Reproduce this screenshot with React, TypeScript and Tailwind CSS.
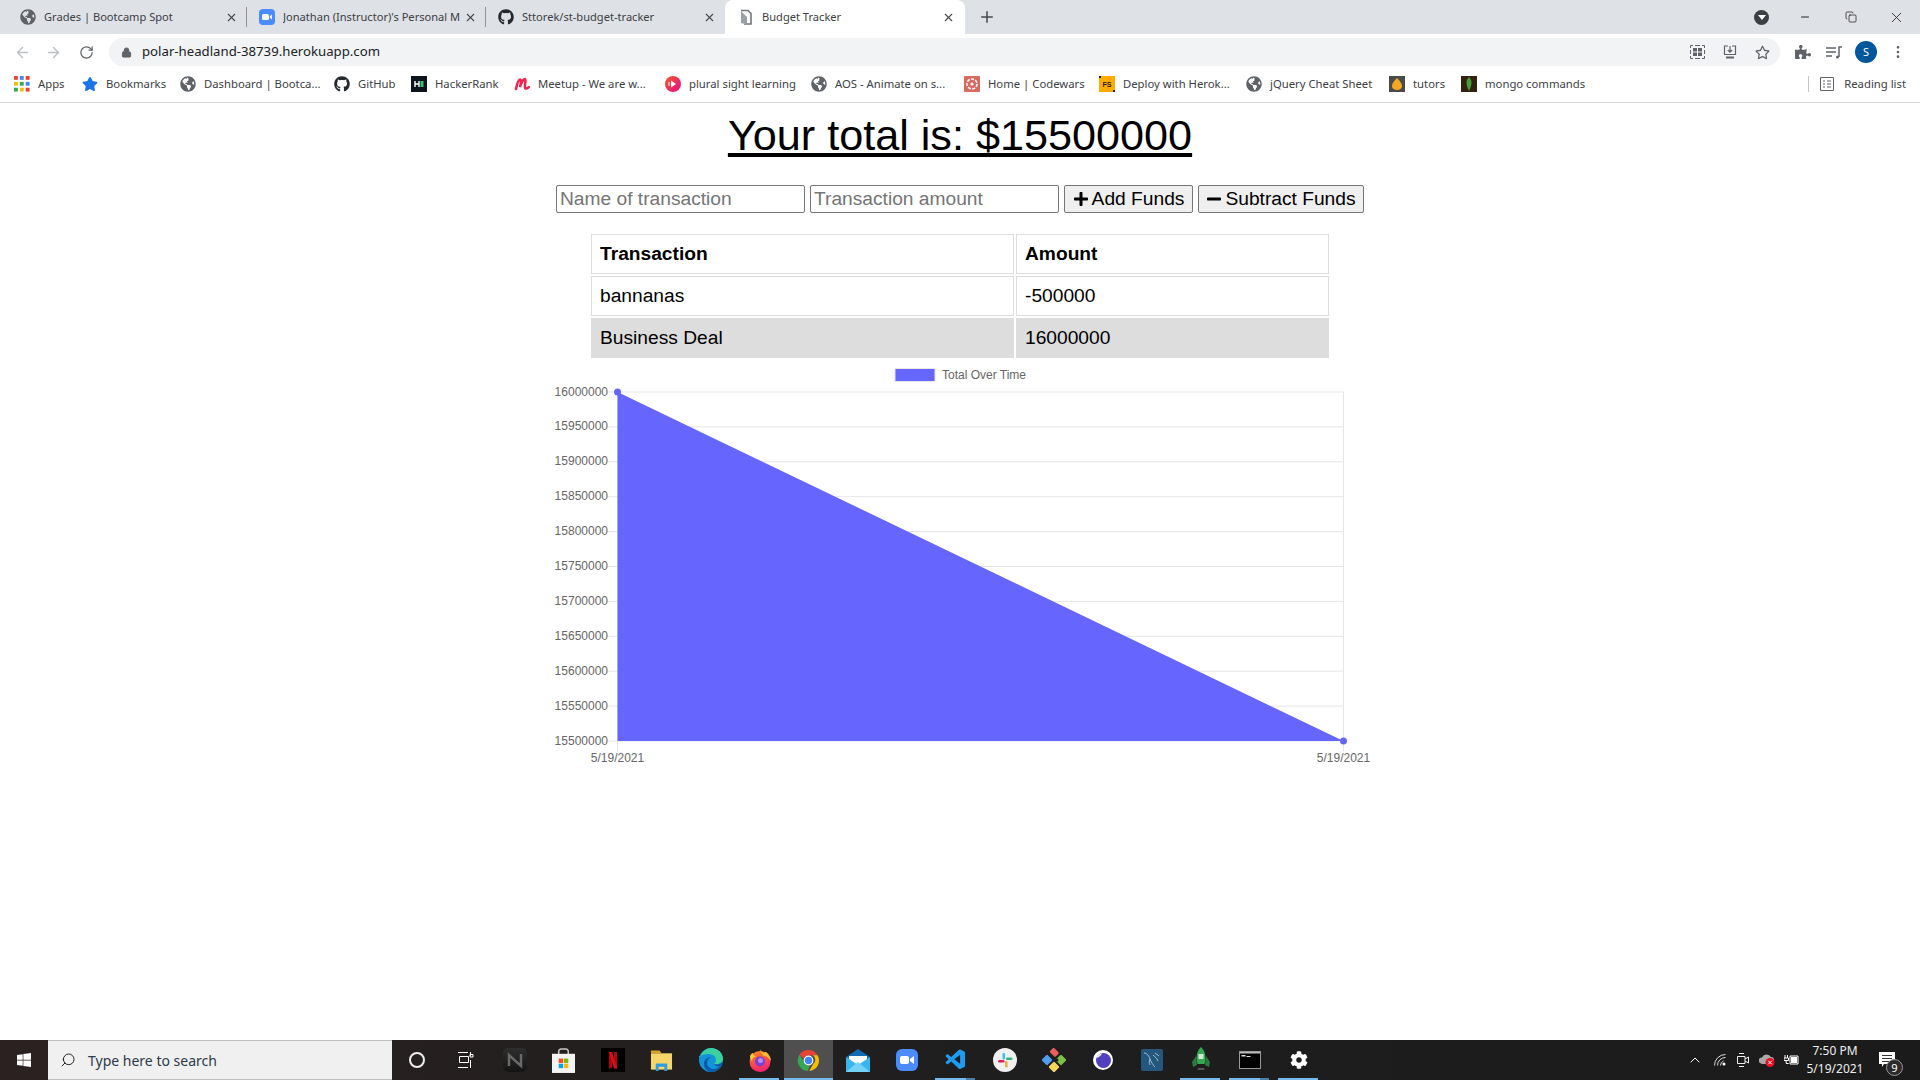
import React from 'react';
import { ArrowLeft, ArrowRight, RotateCw, Lock, X, Plus, Minus, EllipsisVertical, Search, ChevronUp, Copy } from 'lucide-react';
import { FaGithub, FaGlobeAmericas, FaPuzzlePiece, FaStar, FaRegStar, FaWindows, FaPlus, FaMinus, FaCog } from 'react-icons/fa';
import { VscVscode } from 'react-icons/vsc';

const Globe = () => <FaGlobeAmericas className="w-4 h-4 shrink-0 text-[#5f6368]" />;

const AppsIcon = () => (
  <svg viewBox="0 0 15 15" className="w-4 h-4 shrink-0">
    {[0, 5.5, 11].map((y, r) => [0, 5.5, 11].map((x, c) => (
      <rect key={`${r}${c}`} x={x} y={y} width="3.6" height="3.6" fill={['#ea4335', '#4285f4', '#ea4335', '#fbbc04', '#34a853', '#4285f4', '#34a853', '#fbbc04', '#ea4335'][r * 3 + c]} />
    )))}
  </svg>
);

const Zoom = () => (
  <svg viewBox="0 0 16 16" className="w-4 h-4 shrink-0">
    <rect width="16" height="16" rx="4" fill="#4a8cff" />
    <rect x="3" y="5" width="7" height="6" rx="1.5" fill="#fff" />
    <path d="M10.8 7.3 13 5.6v4.8l-2.2-1.7z" fill="#fff" />
  </svg>
);

const tabs = [
  { title: 'Grades | Bootcamp Spot', icon: <Globe /> },
  { title: "Jonathan (Instructor)'s Personal M", icon: <Zoom /> },
  { title: 'Sttorek/st-budget-tracker', icon: <FaGithub className="w-4 h-4 shrink-0 text-[#24292e]" /> },
];

const bookmarks = [
  { label: 'Apps', w: 'w-[68px]', icon: <AppsIcon /> },
  { label: 'Bookmarks', w: 'w-[98px]', icon: <FaStar className="w-4 h-4 shrink-0 text-[#1a73e8]" /> },
  { label: 'Dashboard | Bootca...', w: 'w-[154px]', icon: <Globe /> },
  { label: 'GitHub', w: 'w-[77px]', icon: <FaGithub className="w-4 h-4 shrink-0 text-[#24292e]" /> },
  {
    label: 'HackerRank', w: 'w-[103px]', icon: (
      <svg viewBox="0 0 16 16" className="w-4 h-4 shrink-0"><rect width="16" height="16" fill="#0e141e" /><path d="M4 5v6M8 5v6M4 8h4" stroke="#fff" strokeWidth="1.4" /><rect x="9.5" y="5" width="3" height="6" fill="#2ec866" /></svg>
    ),
  },
  {
    label: 'Meetup - We are w...', w: 'w-[151px]', icon: (
      <svg viewBox="0 0 16 16" className="w-4 h-4 shrink-0"><path d="M2 13C3 8 4.5 3.5 6 3.5 7.5 3.5 6.8 8.5 6 11 7 7 9.5 2.5 11 3c1.6.5-1 7 .2 9 .6 1 2.3.6 3.6-.8" fill="none" stroke="#f0254f" strokeWidth="2.6" strokeLinecap="round" /></svg>
    ),
  },
  {
    label: 'plural sight learning', w: 'w-[146px]', icon: (
      <svg viewBox="0 0 16 16" className="w-4 h-4 shrink-0">
        <defs><linearGradient id="ps" x1="0" y1="0" x2="1" y2="1"><stop offset="0" stopColor="#f05a28" /><stop offset="1" stopColor="#e80a89" /></linearGradient></defs>
        <circle cx="8" cy="8" r="8" fill="url(#ps)" /><path d="M6 4.5v7l5-3.5z" fill="#fff" /><path d="M4 6v4" stroke="#fff" />
      </svg>
    ),
  },
  { label: 'AOS - Animate on s...', w: 'w-[153px]', icon: <Globe /> },
  {
    label: 'Home | Codewars', w: 'w-[135px]', icon: (
      <svg viewBox="0 0 16 16" className="w-4 h-4 shrink-0"><rect width="16" height="16" rx="1" fill="#d9695f" /><circle cx="8" cy="8" r="5" fill="none" stroke="#fff" strokeWidth="1.6" strokeDasharray="3 1.4" /><circle cx="8" cy="8" r="1.6" fill="#fff" /></svg>
    ),
  },
  {
    label: 'Deploy with Herok...', w: 'w-[147px]', icon: (
      <svg viewBox="0 0 16 16" className="w-4 h-4 shrink-0"><rect width="16" height="16" fill="#ffab00" /><path d="M0 0h2v2H0zM14 14h2v2h-2z" fill="#222" /><text x="8" y="11" fontSize="7" fontWeight="700" textAnchor="middle" fill="#222" fontFamily="Liberation Sans">FS</text></svg>
    ),
  },
  { label: 'jQuery Cheat Sheet', w: 'w-[143px]', icon: <Globe /> },
  {
    label: 'tutors', w: 'w-[72px]', icon: (
      <svg viewBox="0 0 16 16" className="w-4 h-4 shrink-0"><rect width="16" height="16" fill="#4a4a48" /><path d="M8 2c2 2 5 5 5 8 0 3-3 4-5 4s-5-1-5-4c0-3 3-6 5-8z" fill="#f5a623" /></svg>
    ),
  },
  {
    label: 'mongo commands', w: 'w-[140px]', icon: (
      <svg viewBox="0 0 16 16" className="w-4 h-4 shrink-0"><rect width="16" height="16" fill="#33210f" /><path d="M8 1c3 3 3.6 7 0 14C4.4 8 5 4 8 1z" fill="#3fa037" /></svg>
    ),
  },
];

const yLabels = [16000000, 15950000, 15900000, 15850000, 15800000, 15750000, 15700000, 15650000, 15600000, 15550000, 15500000];

function Chart() {
  const left = 77.5, right = 803.5, top = 32, step = 34.9;
  const bottom = top + step * 10;
  return (
    <svg viewBox="0 0 840 420" className="block w-[840px] h-[420px] mx-auto font-['Liberation_Sans',sans-serif]">
      <rect x="355" y="8.5" width="40" height="13" fill="#6666ff" stroke="#e6e6e6" />
      <text x="402" y="19" fontSize="12" fill="#666">Total Over Time</text>
      {yLabels.map((v, i) => (
        <g key={v}>
          <line x1={left - 10} x2={right} y1={top + i * step} y2={top + i * step} stroke="#e5e5e5" />
          <text x={left - 9.5} y={top + i * step + 3.5} fontSize="12" fill="#666" textAnchor="end">{v}</text>
        </g>
      ))}
      <line x1={left} x2={left} y1={top} y2={bottom + 10} stroke="#e5e5e5" />
      <line x1={right} x2={right} y1={top} y2={bottom + 10} stroke="#e5e5e5" />
      <polygon points={`${left},${top} ${right},${bottom} ${left},${bottom}`} fill="#6666ff" />
      <circle cx={left} cy={top} r="3.5" fill="#6666ff" />
      <circle cx={right} cy={bottom} r="3.5" fill="#6666ff" />
      <text x={left} y={402} fontSize="12" fill="#666" textAnchor="middle">5/19/2021</text>
      <text x={right} y={402} fontSize="12" fill="#666" textAnchor="middle">5/19/2021</text>
    </svg>
  );
}

const taskIcons: { icon: React.ReactNode; on?: boolean; active?: boolean; multi?: boolean }[] = [
  { icon: <div className="w-4 h-4 rounded-full border-2 border-[#eee]" /> },
  {
    icon: (
      <svg viewBox="0 0 16 16" className="w-4 h-4" fill="none" stroke="#fff"><path d="M0 .5h10M12.5 0v4M1.5 4.5h9v6h-9zM0 15.5h10M12.5 8v8M12 5h3V2.500h-3z" /></svg>
    ),
  },
  {
    icon: (
      <svg viewBox="0 0 24 24" className="w-6 h-6">
        <defs><linearGradient id="nt" x1="0" y1="0" x2="0" y2="1"><stop offset="0" stopColor="#2e2e2e" /><stop offset="1" stopColor="#141414" /></linearGradient></defs>
        <rect width="24" height="24" rx="5" fill="url(#nt)" />
        <path d="M6 18V7l12 11V6" fill="none" stroke="#6a6a6a" strokeWidth="2.5" />
      </svg>
    ),
  },
  {
    icon: (
      <svg viewBox="0 0 24 26" className="w-[23px] h-[25px]">
        <path d="M7 7V3.500A2.500 2.500 0 0 1 9.500 1h5A2.500 2.500 0 0 1 17 3.500V7" fill="none" stroke="#c8c8c8" strokeWidth="1.6" />
        <rect y="6" width="24" height="20" fill="#f3f3f3" />
        <rect x="7" y="11" width="4.6" height="4.6" fill="#f25022" /><rect x="12.4" y="11" width="4.6" height="4.6" fill="#7fba00" />
        <rect x="7" y="16.4" width="4.6" height="4.6" fill="#00a4ef" /><rect x="12.4" y="16.4" width="4.6" height="4.6" fill="#ffb900" />
      </svg>
    ),
  },
  {
    icon: (
      <svg viewBox="0 0 24 24" className="w-6 h-6">
        <rect width="24" height="24" fill="#000" />
        <path d="M8 4h3v16l-3 .5zM13 4h3v16.5l-3-.5z" fill="#b1060f" /><path d="M8 4h3l5 16.500h-3z" fill="#e50914" />
      </svg>
    ),
  },
  {
    icon: (
      <svg viewBox="0 0 24 24" className="w-[23px] h-[23px]">
        <path d="M1 1.5h9l2 3H1z" fill="#d9a128" /><rect x="1" y="4.5" width="22" height="17" fill="#f8d568" />
        <path d="M6 23v-8h12v8h-3v-4.500H9V23z" fill="#2d9fe0" />
      </svg>
    ),
  },
  {
    icon: (
      <svg viewBox="0 0 24 24" className="w-6 h-6">
        <circle cx="12" cy="12" r="12" fill="#1393d8" />
        <path d="M1 9C3 3 8 0 12 0c7 0 12 5 12 11 0 3-3 5-6 5h-3c1-1 2-2 2-4 0-4-4-6-8-6-4 0-8 2-10 3z" fill="#3ccf9f" />
        <path d="M15 16c3 1 7 0 9-3-1 6-6 11-11 11-5 0-8-4-8-8 0-4 3-7 7-7-2 1-4 3-4 6 0 4 4 6 7 6 2 0 4-1 6-3-2 1-4 1-6-2z" fill="#0b5aa8" />
      </svg>
    ),
  },
  {
    on: true,
    icon: (
      <svg viewBox="0 0 24 24" className="w-6 h-6">
        <defs><linearGradient id="ff" x1="0" y1="0" x2="0.3" y2="1"><stop offset="0" stopColor="#ff8a1f" /><stop offset="1" stopColor="#f5256b" /></linearGradient></defs>
        <circle cx="12" cy="13.5" r="10.5" fill="url(#ff)" />
        <path d="M12 1c1 3 3 4 6 3 3 2 5 6 5 9-2-3-4-5-7-5-2-2-4-4-4-7z" fill="#ffbd2e" />
        <path d="M2 8c1-2 2-3 3-3 0 2 1 3 3 3-3 1-4 3-4 5-1-1-2-3-2-5z" fill="#ffcb3a" />
        <circle cx="12" cy="13.5" r="5" fill="#7b3fd0" /><circle cx="12.5" cy="12.5" r="2.5" fill="#b98cf0" />
      </svg>
    ),
  },
  {
    on: true, active: true,
    icon: (
      <svg viewBox="0 0 48 48" className="w-[23px] h-[23px]">
        <path d="M24 2a22 22 0 0 1 19 11H24a11 11 0 0 0-10.4 7.5L5.5 11.5A22 22 0 0 1 24 2z" fill="#ea4335" />
        <path d="M43 13a22 22 0 0 1-17.5 33L34 31a11 11 0 0 0-1-18z" fill="#fbbc04" />
        <path d="M5.5 11.5 15 28a11 11 0 0 0 12 6.5L22 46A22 22 0 0 1 5.5 11.5z" fill="#34a853" />
        <circle cx="24" cy="24" r="9" fill="#4285f4" stroke="#fff" strokeWidth="2.5" />
      </svg>
    ),
  },
  {
    icon: (
      <svg viewBox="0 0 24 23" className="w-6 h-[23px]">
        <path d="M0 8 12 0l12 8v15H0z" fill="#0f6cb5" /><path d="M3 7h18v8H3z" fill="#fff" /><path d="M0 8l12 8 12-8v15H0z" fill="#38b6ee" /><path d="M0 23 12 13l12 10z" fill="#73d2f5" />
      </svg>
    ),
  },
  {
    icon: (
      <svg viewBox="0 0 22 22" className="w-[22px] h-[22px]">
        <rect width="22" height="22" rx="6" fill="#4a8cff" /><rect x="4" y="7" width="9" height="8" rx="2" fill="#fff" /><path d="M14 10l4-3v8l-4-3z" fill="#fff" />
      </svg>
    ),
  },
  { on: true, multi: true, icon: <VscVscode className="w-6 h-6 text-[#1f9cf0]" /> },
  {
    icon: (
      <svg viewBox="0 0 24 24" className="w-6 h-6">
        <circle cx="12" cy="12" r="12" fill="#f0f0f0" />
        <rect x="9.5" y="5" width="2.6" height="6.5" rx="1.3" fill="#36c5f0" /><rect x="13" y="9.5" width="6.5" height="2.6" rx="1.3" fill="#2eb67d" />
        <rect x="12" y="13" width="2.6" height="6.5" rx="1.3" fill="#ecb22e" /><rect x="5" y="12" width="6.5" height="2.6" rx="1.3" fill="#e01e5a" />
      </svg>
    ),
  },
  {
    icon: (
      <svg viewBox="0 0 24 24" className="w-6 h-6">
        <rect x="8.5" y="1" width="8" height="6" rx="1.5" transform="rotate(45 12 4)" fill="#e8605a" />
        <rect x="15" y="8" width="8" height="8" rx="1.5" transform="rotate(45 19 12)" fill="#7cc142" />
        <rect x="8" y="15" width="8" height="8" rx="1.5" transform="rotate(45 12 19)" fill="#f6d65a" />
        <rect x="1" y="8" width="8" height="8" rx="1.5" transform="rotate(45 5 12)" fill="#4f9fee" />
        <circle cx="15" cy="12" r="1.5" fill="#1f1f1f" />
      </svg>
    ),
  },
  {
    icon: (
      <svg viewBox="0 0 20 20" className="w-5 h-5">
        <circle cx="10" cy="10" r="10" fill="#fff" /><circle cx="10.5" cy="10.5" r="7.5" fill="#5240c0" /><path d="M3.5 8A7 7 0 0 1 9 3.5C8 5.5 6 7.5 3.5 8z" fill="#fff" />
      </svg>
    ),
  },
  {
    icon: (
      <svg viewBox="0 0 22 22" className="w-[22px] h-[22px]">
        <rect width="22" height="22" rx="2" fill="#24577d" /><path d="M3 4c3 0 5 3 6 6s3 6 5 8M9 10c-1 2-1 4 0 6M14 4l4 3M12 6c2 2 4 3 5 6" stroke="#c4d6e3" strokeWidth=".8" fill="none" />
      </svg>
    ),
  },
  {
    on: true,
    icon: (
      <svg viewBox="0 0 20 26" className="w-5 h-[26px]">
        <path d="M10 0c4.5 4 5.5 11 3.5 17h-7C4.5 11 5.5 4 10 0z" fill="#36a852" /><rect x="7.5" y="7" width="5" height="5" fill="#cfe9d4" />
        <path d="M5 9 1 15l1 5 4-2zM15 9l4 6-1 5-4-2z" fill="#2c7a3f" /><rect x="6.5" y="21" width="7" height="2" rx="1" fill="#555" />
      </svg>
    ),
  },
  {
    on: true, multi: true,
    icon: (
      <svg viewBox="0 0 22 18" className="w-[22px] h-[18px]">
        <rect x=".5" y=".5" width="21" height="17" fill="#000" stroke="#9a9a9a" /><rect x="1" y="1" width="20" height="1.5" fill="#bbb" />
        <path d="M2.5 4h4v1.500h-4zM7.500 5h4v1h-4z" fill="#ddd" />
      </svg>
    ),
  },
  { on: true, icon: <FaCog className="w-[18px] h-[18px] text-white" /> },
];

export default function App() {
  return (
    <div className="w-[1920px] h-[1080px] flex flex-col overflow-hidden bg-white font-['Noto_Sans',sans-serif] text-[#3c4043]">
      <div className="h-[34px] bg-[#dee1e6] flex items-end pl-2 shrink-0">
        {tabs.map((t, i) => (
          <div key={t.title} className="w-[239px] h-[34px] flex items-center pl-3 text-[11.1px] whitespace-nowrap">
            {t.icon}
            <span className="ml-2 w-[180px] overflow-hidden">{t.title}</span>
            <X className="w-[13px] h-[13px] ml-[1px] text-[#45494d] shrink-0" />
            {i < 2 && <div className="h-5 ml-[8px] border-l border-[#8f9499]" />}
          </div>
        ))}
        <div className="w-[240px] h-[34px] rounded-t-[8px] bg-white flex items-center pl-[13px] text-[11.1px]">
          <svg viewBox="0 0 16 16" className="w-4 h-4 shrink-0"><path d="M3 1.5h7l3 3V15H6" fill="none" stroke="#70757a" strokeWidth="1.6" /><path d="M3 2v12l6 1.5V8z" fill="#9aa0a6" /></svg>
          <span className="ml-2 w-[180px]">Budget Tracker</span>
          <X className="w-[13px] h-[13px] text-[#45494d]" />
        </div>
        <Plus className="w-[18px] h-[18px] ml-[13px] mb-2 text-[#45494d]" />
        <div className="flex-1" />
        <div className="flex items-center h-[34px]">
          <div className="w-[15px] h-[15px] rounded-full bg-[#3c4043] flex items-center justify-center mr-[30px]">
            <div className="border-x-[4px] border-x-transparent border-t-[5px] border-t-white" />
          </div>
          <Minus className="w-[12px] h-[12px] mr-[34px] text-[#222]" strokeWidth={2} />
          <Copy className="w-[12px] h-[12px] mr-[31px] text-[#222]" strokeWidth={1.5} />
          <X className="w-[17px] h-[17px] mr-[15px] text-[#222]" strokeWidth={1.2} />
        </div>
      </div>

      <div className="h-[36px] bg-white flex items-center shrink-0">
        <ArrowLeft className="w-[17px] h-[17px] ml-[14px] text-[#bcc0c4]" />
        <ArrowRight className="w-[17px] h-[17px] ml-[14px] text-[#bcc0c4]" />
        <RotateCw className="w-[15px] h-[15px] ml-[17px] text-[#5f6368]" />
        <div className="ml-[15px] w-[1671px] h-[28px] rounded-full bg-[#f1f3f4] flex items-center pl-[12px] pr-[10px]">
          <Lock className="w-[11px] h-[11px] text-[#5f6368] fill-[#5f6368]" />
          <span className="ml-[10px] text-[13.2px] text-[#202124]">polar-headland-38739.herokuapp.com</span>
          <div className="flex-1" />
          <svg viewBox="0 0 15 14" className="w-[15px] h-[14px]" fill="none" stroke="#5f6368">
            <path d="M.5 3V.5H3M5 .5h5M12 .5h2.5V3M.5 5v4M14.5 5v4M.5 11v2.500H3M5 13.500h5M12 13.500h2.500V11" />
            <path d="M3 3h4v3.500H3zM8 3h4v3.500H8zM3 7.500h4V11H3zM8 7.500h4V11H8z" fill="#5f6368" stroke="none" />
          </svg>
          <svg viewBox="0 0 14 14" className="w-[14px] h-[14px] ml-[18px]" fill="none" stroke="#5f6368" strokeWidth="1.2">
            <path d="M5 1H1.5v8.500h11V1H9M7 1v6M4.800 5 7 7.200 9.200 5" /><path d="M3 12.500h8" strokeWidth="2" />
          </svg>
          <FaRegStar className="w-[15px] h-[15px] ml-[18px] text-[#5f6368]" />
        </div>
        <FaPuzzlePiece className="w-4 h-4 ml-[15px] text-[#5f6368]" />
        <svg viewBox="0 0 16 13" className="w-4 h-[13px] ml-[15px]" fill="none" stroke="#5f6368" strokeWidth="1.5">
          <path d="M0 2h10M0 6h10M0 10h6M13 11V1h3" /><circle cx="11.5" cy="11" r="1.5" fill="#5f6368" stroke="none" />
        </svg>
        <div className="w-[22px] h-[22px] ml-[13px] rounded-full bg-[#01579b] text-white text-[11px] flex items-center justify-center">S</div>
        <EllipsisVertical className="w-4 h-4 ml-[13px] text-[#5f6368]" />
      </div>

      <div className="h-[33px] pb-1 bg-white border-b border-[#d4d6d9] flex items-center pl-[14px] text-[11.3px] whitespace-nowrap shrink-0">
        {bookmarks.map(b => (
          <div key={b.label} className={`${b.w} flex items-center gap-2 shrink-0`}>
            {b.icon}
            <span>{b.label}</span>
          </div>
        ))}
        <div className="flex-1" />
        <div className="h-4 border-l border-[#c4c7ca] mr-[11px]" />
        <svg viewBox="0 0 14 14" className="w-[14px] h-[14px]" fill="none" stroke="#5f6368">
          <path d="M.5.5h13v13H.5zM3 4h2M7 4h4M3 7h2M7 7h4M3 10h2M7 10h4" />
        </svg>
        <span className="ml-[10px] mr-[14px]">Reading list</span>
      </div>

      <main className="flex-1 text-black font-['Liberation_Sans',sans-serif] text-[19.2px]">
        <h1 className="mt-[6px] text-center text-[43.2px] leading-[52px] underline">Your total is: $15500000</h1>
        <form className="mt-[24px] flex justify-center gap-[5px] h-[28px]">
          <input placeholder="Name of transaction" className="w-[249px] border border-[#767676] rounded-[2px] px-[3px] placeholder:text-[#757575]" />
          <input placeholder="Transaction amount" className="w-[249px] border border-[#767676] rounded-[2px] px-[3px] placeholder:text-[#757575]" />
          <button type="button" className="w-[129px] border border-[#767676] rounded-[2px] bg-[#efefef] flex items-center justify-center gap-[3px]"><FaPlus className="w-4 h-4" />Add Funds</button>
          <button type="button" className="w-[166px] border border-[#767676] rounded-[2px] bg-[#efefef] flex items-center justify-center gap-[3px]"><FaMinus className="w-4 h-4" />Subtract Funds</button>
        </form>
        <table className="mt-[19px] mx-auto w-[742px] border-separate border-spacing-[2px] table-fixed">
          <thead>
            <tr className="h-[40px]">
              <th className="w-[423px] border border-[#ddd] px-2 text-left">Transaction</th>
              <th className="border border-[#ddd] px-2 text-left">Amount</th>
            </tr>
          </thead>
          <tbody>
            <tr className="h-[40px]">
              <td className="border border-[#ddd] px-2">bannanas</td>
              <td className="border border-[#ddd] px-2">-500000</td>
            </tr>
            <tr className="h-[40px] bg-[#ddd]">
              <td className="border border-[#ddd] px-2">Business Deal</td>
              <td className="border border-[#ddd] px-2">16000000</td>
            </tr>
          </tbody>
        </table>
        <Chart />
      </main>

      <div className="h-[40px] bg-gradient-to-r from-[#2a2120] via-[#1f1e1e] to-[#1c1b1b] flex items-center text-white shrink-0">
        <div className="w-[48px] flex justify-center"><FaWindows className="w-4 h-4" /></div>
        <div className="w-[344px] h-[40px] bg-[#f0f0f0] border-y border-[#bdbdbd] flex items-center pl-[12px] text-[#2b3a4a] text-[14px]">
          <Search className="w-[16px] h-[16px] -scale-x-100 text-[#222]" strokeWidth={1.5} />
          <span className="ml-[12px]">Type here to search</span>
        </div>
        {taskIcons.map((t, i) => (
          <div key={i} className={`relative w-[49px] h-[40px] flex items-center justify-center shrink-0 ${t.active ? 'bg-[#4f4f4f]' : ''}`}>
            {t.icon}
            {t.on && <div className={`absolute bottom-0 h-[2px] bg-[#76b9ed] ${t.active ? 'left-0 right-0' : 'left-[4px] right-[5px]'}`} />}
            {t.multi && <div className="absolute bottom-0 right-[5px] w-[9px] h-[2px] bg-[#4a7fa8]" />}
          </div>
        ))}
        <div className="flex-1" />
        <ChevronUp className="w-[16px] h-[16px] mr-[11px]" strokeWidth={1.5} />
        <svg viewBox="0 0 12 12" className="w-[12px] h-[12px] mr-[11px]" fill="none" stroke="#ddd">
          <path d="M.5 11.5A11 11 0 0 1 11.5.5M3.5 11.5a8 8 0 0 1 8-8M6.5 11.5a5 5 0 0 1 3-4.500" />
          <circle cx="10" cy="10" r="1.5" fill="#fff" stroke="none" />
        </svg>
        <svg viewBox="0 0 12 16" className="w-[12px] h-[16px] mr-[10px]" fill="none" stroke="#eee">
          <path d="M.5 4.5h7.500v7H.5zM8 7l3.500-2v6L8 9M2 1.500h5M2 14.500h5" />
        </svg>
        <svg viewBox="0 0 16 14" className="w-4 h-[14px] mr-[9px]">
          <path d="M1 10a3 3 0 0 1 2-5.500A5 5 0 0 1 12 4a3 3 0 0 1 3 4H10v3H3z" fill="#a8a8a8" />
          <circle cx="11" cy="9.5" r="4.5" fill="#e81123" />
          <path d="M9.3 7.8l3.4 3.4M12.7 7.8l-3.4 3.4" stroke="#fff" />
        </svg>
        <svg viewBox="0 0 15 12" className="w-[15px] h-[12px]" fill="none" stroke="#fff">
          <path d="M1 1v3M3.5 1v3M0 4h4.500v2.500H0zM2.200 6.500v3h2.500" />
          <path d="M6 2h8v8H6z" /><rect x="7" y="3" width="6" height="6" fill="#fff" stroke="none" />
        </svg>
        <div className="w-[70px] ml-[1px] text-[12px] leading-[18px] text-center text-[#eee]">
          <div>7:50 PM</div>
          <div>5/19/2021</div>
        </div>
        <div className="relative w-[50px] h-[40px] pl-[9px] pt-[12px]">
          <svg viewBox="0 0 16 16" className="w-4 h-4">
            <path d="M0 0h16v12H5L3 15v-3H0z" fill="#fff" /><path d="M3 3.500h10M3 6.500h10M3 9.500h7" stroke="#333" />
          </svg>
          <div className="absolute left-[16px] top-[19px] w-[17px] h-[17px] rounded-full bg-[#2b2b2b] border border-[#999] text-[11px] leading-[15px] text-center">9</div>
        </div>
      </div>
    </div>
  );
}
